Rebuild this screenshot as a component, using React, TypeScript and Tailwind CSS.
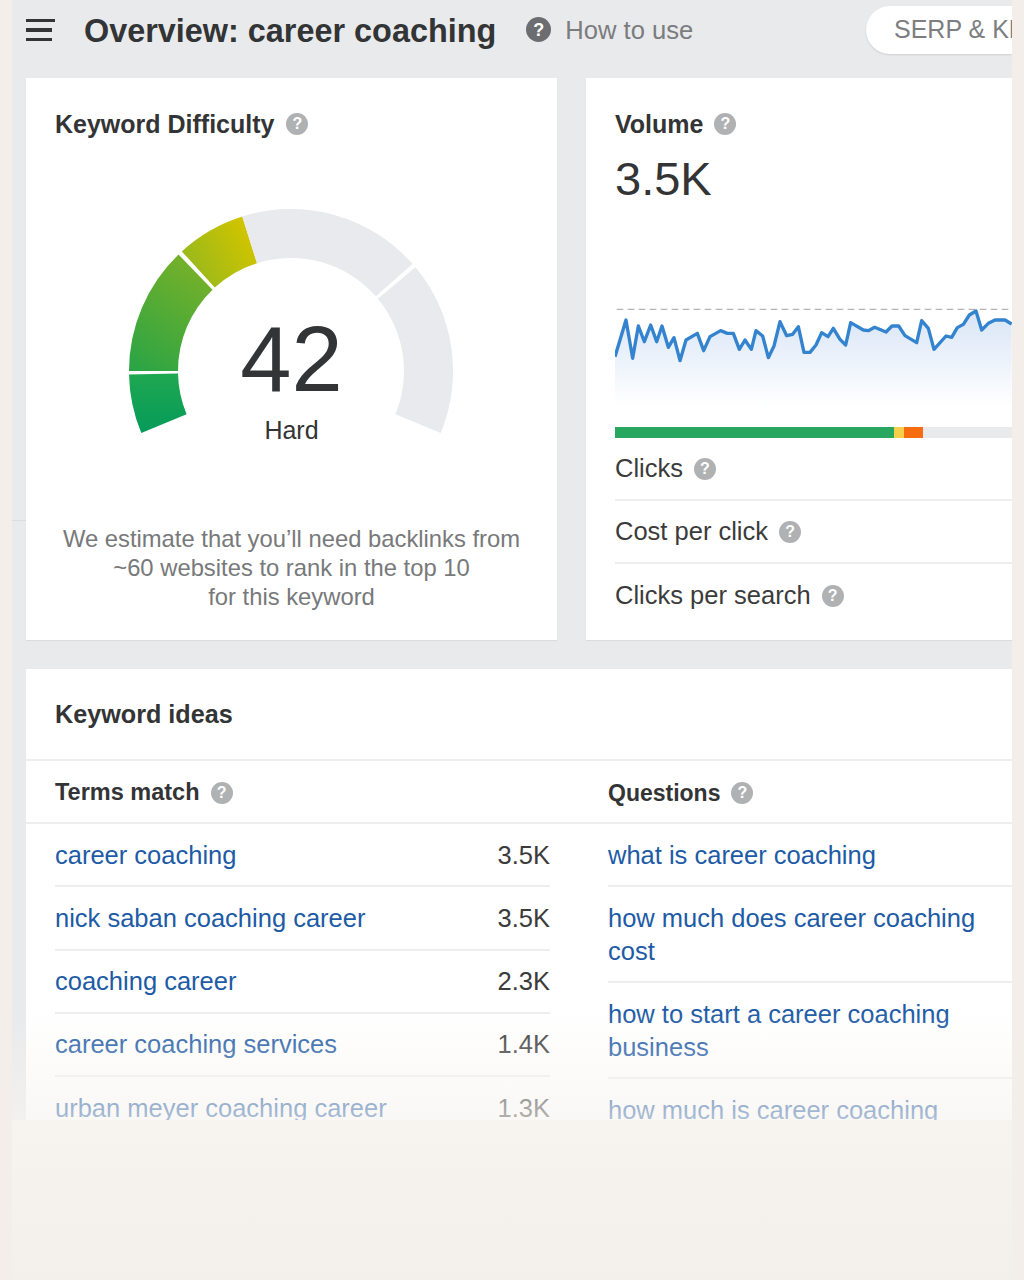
import React from "react";

const linePts =
  "45,200 78,90 98,205 115,108 133,155 152,105 170,155 186,108 205,172 222,143 240,212 258,150 292,130 311,182 330,140 362,122 382,130 400,130 418,178 435,150 454,178 468,122 488,138 505,203 522,168 540,95 560,137 578,133 595,110 612,187 630,187 648,165 665,128 684,140 700,115 720,148 737,165 752,98 790,120 805,122 824,112 858,126 876,108 896,108 915,137 950,158 965,92 985,115 1002,178 1038,138 1055,142 1072,113 1090,103 1108,75 1128,63 1145,120 1165,100 1185,90 1215,90 1235,102";

const terms = [
  ["career coaching", "3.5K"],
  ["nick saban coaching career", "3.5K"],
  ["coaching career", "2.3K"],
  ["career coaching services", "1.4K"],
  ["urban meyer coaching career", "1.3K"],
];

const questions = [
  "what is career coaching",
  "how much does career coaching cost",
  "how to start a career coaching business",
  "how much is career coaching",
];

// angles in degrees, 0 = pointing left, going clockwise over the top
const arc = (a: number, b: number) => {
  const cx = 291;
  const cy = 371;
  const R = 162;
  const r = 113;
  const pt = (rad: number, deg: number) => {
    const t = (deg * Math.PI) / 180;
    return `${(cx - rad * Math.cos(t)).toFixed(1)} ${(cy - rad * Math.sin(t)).toFixed(1)}`;
  };
  return `M${pt(R, a)} A${R} ${R} 0 0 1 ${pt(R, b)} L${pt(r, b)} A${r} ${r} 0 0 0 ${pt(r, a)} Z`;
};

const Help = ({ dark }: { dark?: boolean }) => (
  <span
    className={
      "inline-flex shrink-0 items-center justify-center rounded-full font-bold leading-none text-white " +
      (dark ? "size-[25px] bg-[#6b6d70] text-[18px]" : "size-[22px] bg-[#b0b1b3] text-[16px]")
    }
  >
    ?
  </span>
);

const Gauge = () => (
  <svg className="absolute left-0 top-0" width="531" height="500" viewBox="26 78 531 500">
    <defs>
      <linearGradient id="g1" x1="0" y1="1" x2="0" y2="0">
        <stop offset="0" stopColor="#059b5a" />
        <stop offset="1" stopColor="#1fa850" />
      </linearGradient>
      <linearGradient id="g2" x1="0" y1="1" x2="0.5" y2="0">
        <stop offset="0" stopColor="#28a446" />
        <stop offset="1" stopColor="#72b02a" />
      </linearGradient>
      <linearGradient id="g3" x1="0" y1="1" x2="1" y2="0.5">
        <stop offset="0" stopColor="#8db622" />
        <stop offset="1" stopColor="#cfc400" />
      </linearGradient>
    </defs>
    <path d={arc(-22.5, -1.2)} fill="url(#g1)" />
    <path d={arc(0, 46)} fill="url(#g2)" />
    <path d={arc(47.6, 72.5)} fill="url(#g3)" />
    <path d={arc(72.5, 138.6)} fill="#e9eaee" />
    <path d={arc(140.2, 202.5)} fill="#e9eaee" />
  </svg>
);

const StatRow = ({ label, last }: { label: string; last?: boolean }) => (
  <div
    className={
      "flex h-[63px] items-center gap-[11px] text-[25.5px] text-[#3b3b3b] " +
      (last ? "" : "border-b-2 border-[#eeeeef]")
    }
  >
    {label} <Help />
  </div>
);

export default function App() {
  return (
    <div
      className="relative h-[1280px] w-[1024px] overflow-hidden bg-[#f3eeea] pl-3 pr-3 text-[#333435]"
      style={{ fontFamily: '"Liberation Sans", Arial, sans-serif' }}
    >
      <div className="relative h-[1120px] overflow-hidden bg-[#e9eaec] pl-3.5">
        <div className="absolute left-0 top-[520px] h-px w-[14px] bg-[#dcdddf]" />
        <header className="flex h-[78px] items-center pb-[18px]">
          <div className="flex w-[30px] flex-col gap-[6px]">
            <div className="h-[3.5px] w-[29px] bg-[#333435]" />
            <div className="h-[3.5px] w-[26px] bg-[#333435]" />
            <div className="h-[3.5px] w-[26px] bg-[#333435]" />
          </div>
          <h1 className="ml-[28px] whitespace-nowrap pt-[2px] text-[32.4px] font-bold leading-none">
            Overview: career coaching
          </h1>
          <div className="ml-[30px]">
            <Help dark />
          </div>
          <span className="ml-[14px] whitespace-nowrap text-[25.6px] text-[#7a7c7e]">How to use</span>
          <div className="ml-auto flex h-[48px] w-[146px] items-center overflow-hidden whitespace-nowrap rounded-l-[24px] bg-white pl-[28px] text-[25px] text-[#7d7e80] shadow-[0_1px_2px_rgba(0,0,0,0.12)]">
            SERP &amp; KD
          </div>
        </header>

        <div className="flex gap-[29px]">
          <section className="relative h-[562px] w-[531px] shrink-0 bg-white shadow-[0_1px_1px_rgba(0,0,0,0.06)]">
            <Gauge />
            <div className="relative flex items-center gap-[12px] pl-[29px] pt-[30px] text-[25px] font-bold leading-[32px]">
              Keyword Difficulty <Help />
            </div>
            <div className="relative mt-[173px] text-center text-[92px] leading-[92px] text-[#333435]">42</div>
            <div className="relative mt-[9px] text-center text-[25px] leading-[32px]">Hard</div>
            <p className="relative mt-[78px] text-center text-[23.8px] leading-[29px] text-[#77797b]">
              We estimate that you’ll need backlinks from
              <br />
              ~60 websites to rank in the top 10
              <br />
              for this keyword
            </p>
          </section>

          <section className="h-[562px] min-w-0 flex-1 overflow-hidden bg-white pl-[29px] shadow-[0_1px_1px_rgba(0,0,0,0.06)]">
            <div className="flex items-center gap-[11px] pt-[30px] text-[25px] font-bold leading-[32px]">
              Volume <Help />
            </div>
            <div className="mt-[12px] text-[47px] leading-[54px]">3.5K</div>
            <svg className="mt-[84px] block" width="397" height="120" viewBox="45 0 1191 360">
              <defs>
                <linearGradient id="area" x1="0" y1="0" x2="0" y2="1">
                  <stop offset="0" stopColor="#d8e5f6" />
                  <stop offset="1" stopColor="#ffffff" />
                </linearGradient>
              </defs>
              <polygon points={`45,350 ${linePts} 1235,350`} fill="url(#area)" />
              <line x1="50" y1="58" x2="1236" y2="58" stroke="#b5b5b5" strokeWidth="4" strokeDasharray="20 13" />
              <polyline points={linePts} fill="none" stroke="#3483cf" strokeWidth="10" strokeLinejoin="round" />
            </svg>
            <div className="mt-[17px] flex h-[11px] bg-[#e9eaec]">
              <div className="w-[279px] bg-[#27a760]" />
              <div className="w-[10px] bg-[#f6d04d]" />
              <div className="w-[19px] bg-[#f86c11]" />
            </div>
            <div>
              <StatRow label="Clicks" />
              <StatRow label="Cost per click" />
              <StatRow label="Clicks per search" last />
            </div>
          </section>
        </div>

        <section className="mt-[29px] bg-white">
          <div className="flex h-[92px] items-center border-b-2 border-[#eeeeef] pl-[29px] pt-[2px] text-[25.2px] font-bold">
            Keyword ideas
          </div>
          <div className="flex h-[63px] items-center border-b-2 border-[#eeeeef] pl-[29px] pt-[3px] text-[23.5px] font-bold">
            <div className="flex w-[553px] items-center gap-[11px]">
              Terms match <Help />
            </div>
            <div className="flex items-center gap-[11px] text-[23px]">
              Questions <Help />
            </div>
          </div>
          <div className="flex pl-[29px]">
            <div className="w-[495px] shrink-0">
              {terms.map(([term, vol]) => (
                <div
                  key={term}
                  className="flex h-[63.25px] items-center justify-between border-b-2 border-[#eeeeef] text-[25.5px]"
                >
                  <span className="text-[#1d5ba6]">{term}</span>
                  <span className="text-[#3b3b3b]">{vol}</span>
                </div>
              ))}
            </div>
            <div className="ml-[58px] flex-1">
              {questions.map((q) => (
                <div key={q} className="border-b-2 border-[#eeeeef] pb-[13px] pr-[20px] pt-[15px] text-[25.5px] leading-[33px] text-[#1d5ba6]">
                  {q}
                </div>
              ))}
            </div>
          </div>
        </section>

        <div className="absolute inset-x-0 bottom-0 h-[110px] bg-gradient-to-b from-[#f7f4f000] to-[#f7f4f0a6]" />
      </div>
      <div className="h-[160px] bg-gradient-to-b from-[#f7f4f0] to-[#f3efea]" />
    </div>
  );
}
